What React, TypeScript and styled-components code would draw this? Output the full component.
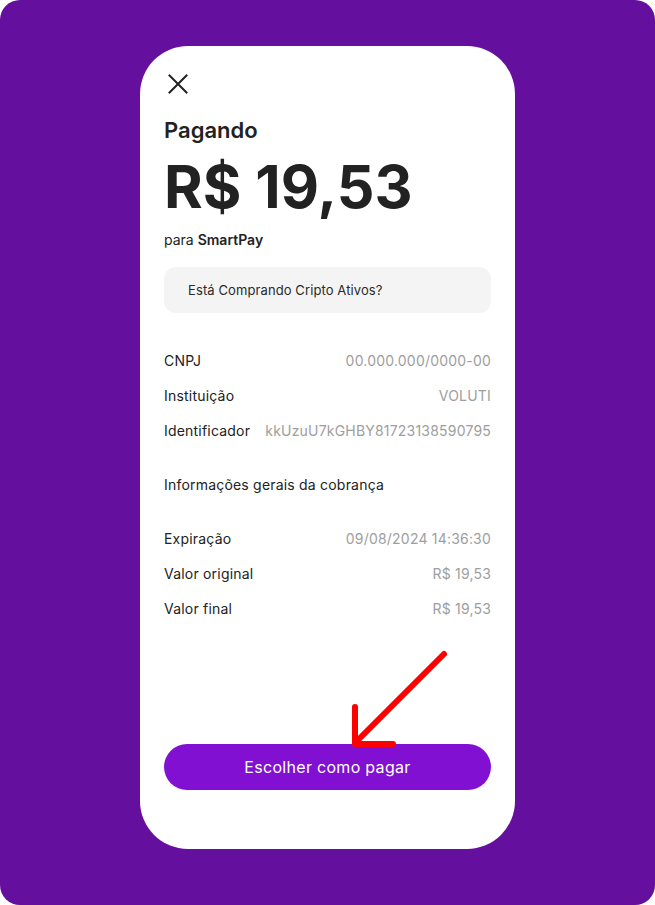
import React from "react";
import styled, { createGlobalStyle } from "styled-components";

const Global = createGlobalStyle`
  html, body { margin: 0; padding: 0; background: #ffffff; }
  body { font-family: Inter, "Noto Sans", sans-serif; -webkit-font-smoothing: antialiased; }
`;

const Frame = styled.div`
  position: relative;
  width: 655px;
  height: 905px;
  background: #650f9e;
  border-radius: 20px;
  display: flex;
  justify-content: center;
  padding-top: 46px;
  box-sizing: border-box;
`;

const Card = styled.div`
  width: 375px;
  height: 803px;
  background: #ffffff;
  border-radius: 48px;
  box-sizing: border-box;
  padding: 28px 24px 59px;
  display: flex;
  flex-direction: column;
  color: #222222;
`;

const CloseButton = styled.button`
  width: 20px;
  height: 20px;
  padding: 0;
  margin: 0 0 0 4px;
  border: none;
  background: none;
  display: block;
  cursor: pointer;
`;

const Title = styled.h2`
  margin: 22px 0 0;
  font-size: 22px;
  line-height: 28px;
  font-weight: 600;
  color: #222222;
`;

const Amount = styled.h1`
  margin: 14px 0 0;
  font-size: 59px;
  line-height: 58px;
  font-weight: 700;
  letter-spacing: 0;
  color: #222222;
`;

const Recipient = styled.p`
  margin: 14px 0 0;
  font-size: 14px;
  line-height: 20px;
  font-weight: 400;
  color: #222222;
  strong { font-weight: 600; }
`;

const Notice = styled.div`
  margin-top: 17px;
  height: 46px;
  border-radius: 12px;
  background: #f4f4f4;
  display: flex;
  align-items: center;
  padding-left: 24px;
  font-size: 13px;
  letter-spacing: 0.1px;
  color: #2a2a2a;
`;

const Section = styled.div<{ $gap: number }>`
  margin-top: ${(p) => p.$gap}px;
  display: flex;
  flex-direction: column;
`;

const Row = styled.div`
  height: 35px;
  display: flex;
  align-items: center;
  justify-content: space-between;
  font-size: 14px;
  letter-spacing: 0.2px;
`;

const Label = styled.span`
  color: #222222;
`;

const Value = styled.span`
  color: #9e9e9e;
`;

const Heading = styled.div`
  margin-top: 19px;
  height: 35px;
  display: flex;
  align-items: center;
  font-size: 14px;
  letter-spacing: 0.2px;
  color: #222222;
`;

const PayButton = styled.button`
  margin-top: auto;
  height: 46px;
  width: 100%;
  border: none;
  border-radius: 23px;
  background: #8210d2;
  color: #ffffff;
  font-family: Inter, "Noto Sans", sans-serif;
  font-size: 16px;
  font-weight: 400;
  letter-spacing: 0.3px;
  cursor: pointer;
`;

const ArrowOverlay = styled.svg`
  position: absolute;
  left: 0;
  top: 0;
  pointer-events: none;
`;

const info = [
  ["CNPJ", "00.000.000/0000-00"],
  ["Instituição", "VOLUTI"],
  ["Identificador", "kkUzuU7kGHBY81723138590795"],
];

const charge = [
  ["Expiração", "09/08/2024 14:36:30"],
  ["Valor original", "R$ 19,53"],
  ["Valor final", "R$ 19,53"],
];

export default function App() {
  return (
    <>
      <Global />
      <Frame>
        <Card>
          <CloseButton aria-label="Fechar">
            <svg width="20" height="20" viewBox="0 0 20 20">
              <path d="M1.5 1.5 L18.5 18.5 M18.5 1.5 L1.5 18.5" stroke="#222" strokeWidth="2" strokeLinecap="square" />
            </svg>
          </CloseButton>
          <Title>Pagando</Title>
          <Amount>R$ 19,53</Amount>
          <Recipient>
            para <strong>SmartPay</strong>
          </Recipient>
          <Notice>Está Comprando Cripto Ativos?</Notice>
          <Section $gap={29.5}>
            {info.map(([l, v]) => (
              <Row key={l}>
                <Label>{l}</Label>
                <Value>{v}</Value>
              </Row>
            ))}
          </Section>
          <Heading>Informações gerais da cobrança</Heading>
          <Section $gap={19}>
            {charge.map(([l, v]) => (
              <Row key={l}>
                <Label>{l}</Label>
                <Value>{v}</Value>
              </Row>
            ))}
          </Section>
          <PayButton>Escolher como pagar</PayButton>
        </Card>
        <ArrowOverlay width="655" height="905" viewBox="0 0 655 905">
          <path
            d="M444 654 L358 740 M355 707 L355 744 L393 744"
            stroke="#ff0000"
            strokeWidth="6"
            strokeLinecap="round"
            strokeLinejoin="round"
            fill="none"
          />
        </ArrowOverlay>
      </Frame>
    </>
  );
}
